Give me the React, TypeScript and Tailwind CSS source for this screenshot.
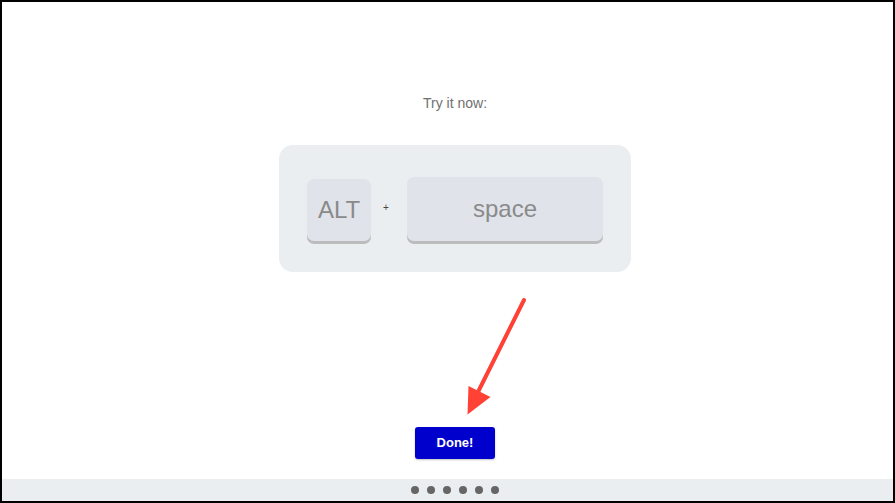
import React from 'react';

const dots = [0, 1, 2, 3, 4, 5];

const Key: React.FC<{ label: string; className: string }> = ({ label, className }) => (
  <div
    className={`flex items-center justify-center rounded-[7px] bg-[#e0e3e9] text-[24px] text-[#8a8a8a] shadow-[0_3px_0_#bcbcbc] ${className}`}
  >
    {label}
  </div>
);

const App: React.FC = () => {
  return (
    <div
      className="relative flex h-[503px] w-[895px] flex-col border-2 border-black bg-white"
      style={{ fontFamily: '"Liberation Sans", Arial, sans-serif' }}
    >
      <div className="flex flex-1 flex-col items-center pl-[15px]">
        <p className="mt-[93px] text-[14px] leading-[16px] text-[#707070]">Try it now:</p>

        <div className="mt-[34px] flex h-[127px] w-[352px] items-end rounded-[14px] bg-[#ebeef1] px-[28px] pb-[31px]">
          <Key label="ALT" className="h-[62px] w-[64px]" />
          <span className="mb-[28px] flex w-[36px] justify-center pr-[6px] text-[10px] leading-none text-[#444]">+</span>
          <Key label="space" className="h-[64px] w-[196px]" />
        </div>

        <button className="mt-[155px] h-[32px] w-[80px] rounded-[3px] bg-[#0000cc] text-[13px] font-bold text-white shadow-[0_1px_2px_rgba(0,0,0,0.25)]">
          Done!
        </button>
      </div>

      <div className="flex h-[22px] items-center justify-center gap-[8px] bg-[#ebeef1] pl-[15px]">
        {dots.map((d) => (
          <span key={d} className="h-[8px] w-[8px] rounded-full bg-[#666]" />
        ))}
      </div>

      <svg
        className="pointer-events-none absolute left-0 top-0"
        width="891"
        height="499"
        viewBox="2 2 891 499"
      >
        <line x1="524" y1="300" x2="478" y2="392" stroke="#ff4136" strokeWidth="4" strokeLinecap="round" />
        <polygon points="467.5,414.5 468.5,386 490.5,397" fill="#ff4136" />
      </svg>
    </div>
  );
};

export default App;
